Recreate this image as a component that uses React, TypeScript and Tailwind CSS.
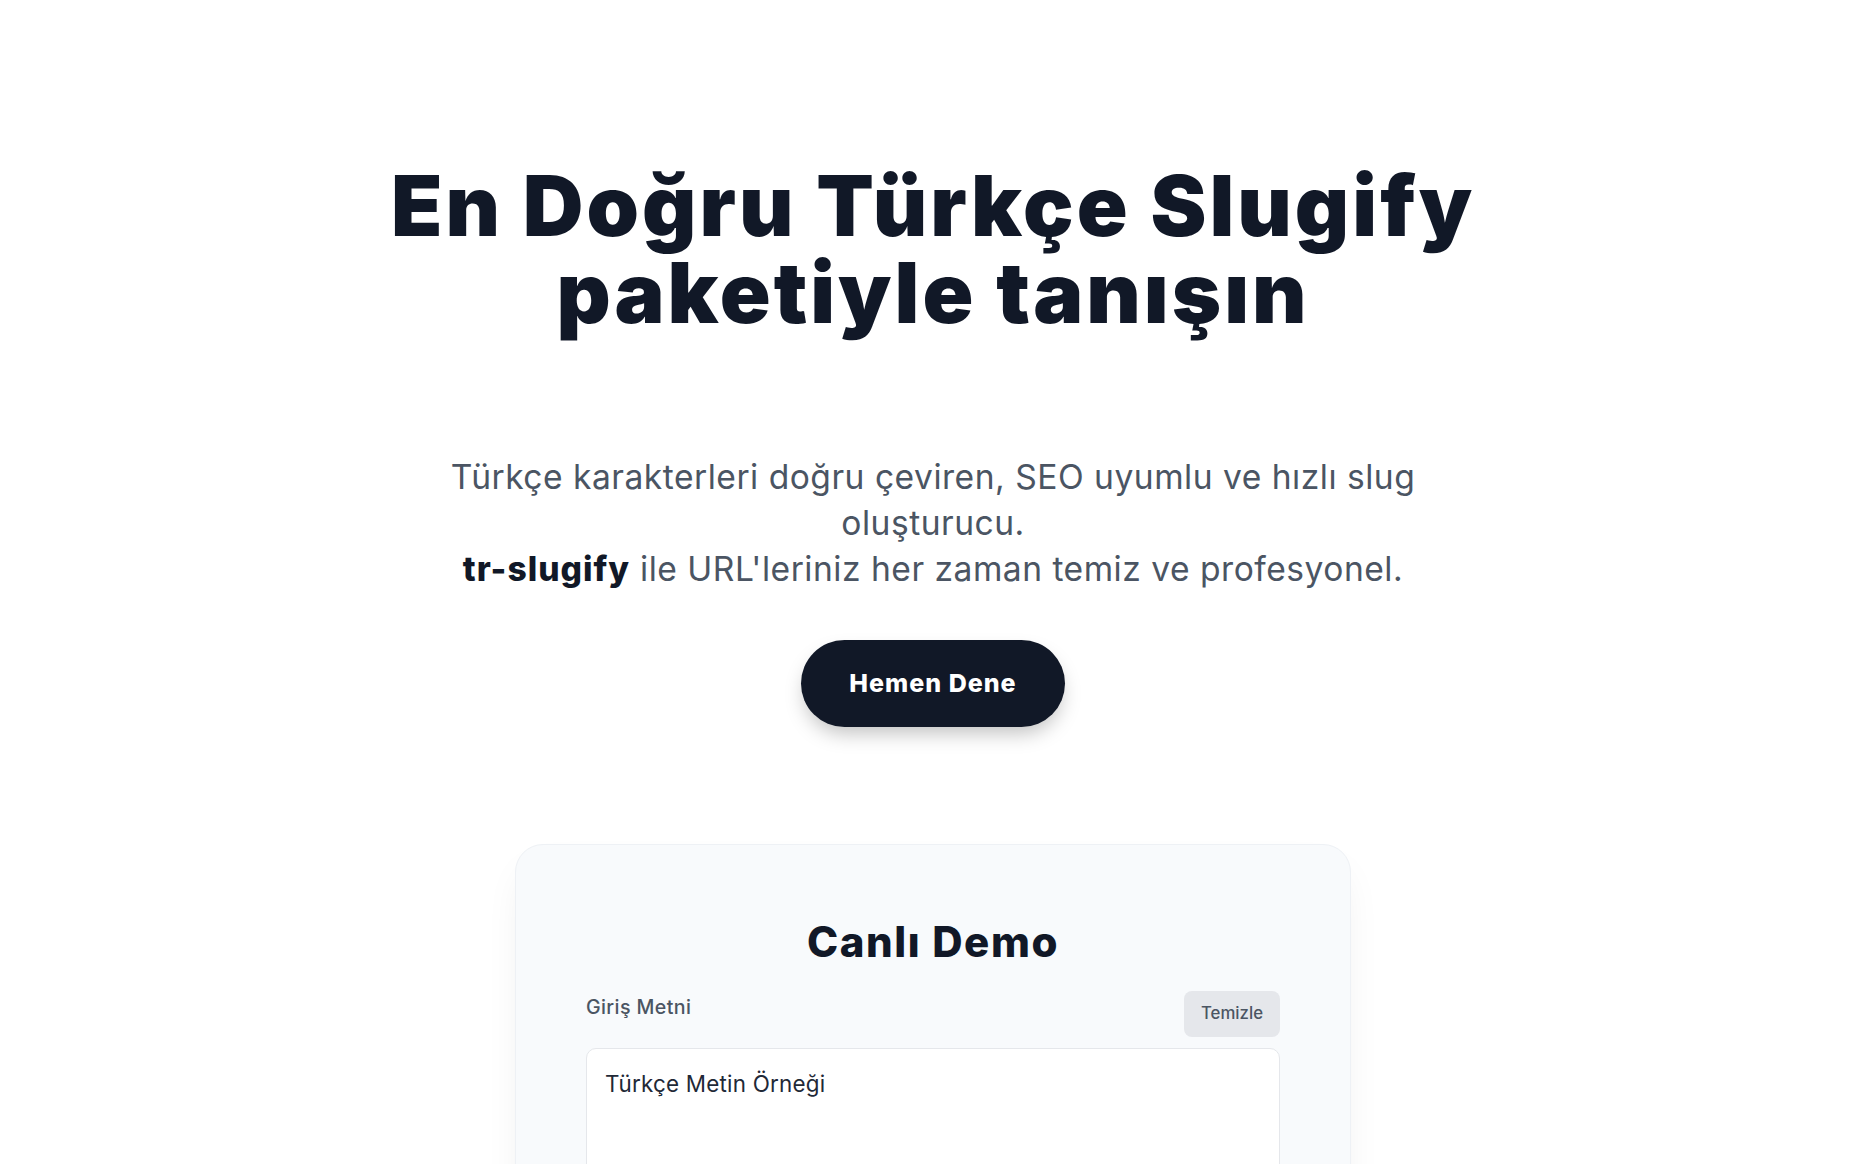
import { useState } from "react";

const App = () => {
    const [text, setText] = useState("Türkçe Metin Örneği");

    return (
        <main className="min-h-screen bg-white font-['Inter','Noto_Sans',sans-serif] text-[#111827]">
            {/* Hero */}
            <section className="flex flex-col items-center pt-[162px] text-center">
                <h1 className="text-[84px] font-black leading-[87px] tracking-[0.036em] text-[#111827]">
                    En Doğru Türkçe Slugify
                    <br />
                    paketiyle tanışın
                </h1>
                <p className="mt-[118px] max-w-[1075px] text-[33.6px] leading-[46px] tracking-[0.015em] text-[#4b5563]">
                    Türkçe karakterleri doğru çeviren, SEO uyumlu ve hızlı slug oluşturucu.
                    <br />
                    <strong className="font-extrabold tracking-[0.03em] text-[#111827]">tr-slugify</strong> ile URL'leriniz her zaman temiz ve profesyonel.
                </p>
                <button className="mt-[48px] h-[87px] w-[264px] rounded-full bg-[#111827] text-[25px] font-extrabold tracking-[0.04em] text-white shadow-[0_10px_20px_-4px_rgba(0,0,0,0.25)]">
                    Hemen Dene
                </button>
            </section>

            {/* Demo card */}
            <section className="mx-auto mt-[117px] w-[836px] rounded-[28px] border border-[#eef1f5] bg-[#f8fafc] px-[70px] pb-[60px] pt-[72px] shadow-[0_20px_40px_-10px_rgba(0,0,0,0.08)]">
                <h2 className="text-center text-[42px] font-extrabold leading-[50px] tracking-[0.038em] text-[#111827]">Canlı Demo</h2>
                <div className="mt-[24px] flex items-start justify-between">
                    <label className="pt-[2px] text-[19.6px] font-medium leading-[28px] tracking-[0.02em] text-[#4b5563]">Giriş Metni</label>
                    <button
                        onClick={() => setText("")}
                        className="h-[46px] w-[96px] rounded-[8px] bg-[#e5e7eb] text-[16.8px] font-medium text-[#4b5563]"
                    >
                        Temizle
                    </button>
                </div>
                <textarea
                    value={text}
                    onChange={(e) => setText(e.target.value)}
                    rows={5}
                    className="mt-[11px] block w-full resize-none rounded-[10px] border border-[#e5e7eb] bg-white p-[18px] text-[22.4px] leading-[33.6px] tracking-[0.01em] text-[#1f2937] outline-none"
                />
            </section>
        </main>
    );
};

export default App;
